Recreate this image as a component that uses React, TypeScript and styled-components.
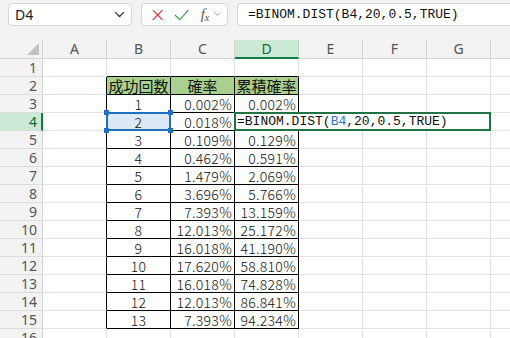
import styled, { createGlobalStyle } from "styled-components";

const GlobalStyle = createGlobalStyle`
  body {
    margin: 0;
    background: #ffffff;
    font-family: "Noto Sans", "Liberation Sans", sans-serif;
  }
`;

const COLUMNS = ["A", "B", "C", "D", "E", "F", "G", "H"];
const ROW_COUNT = 16;
const FORMULA = "=BINOM.DIST(B4,20,0.5,TRUE)";

// data for B3:D15
const rows = [
  { n: "1", p: "0.002%", cum: "0.002%" },
  { n: "2", p: "0.018%", cum: "" },
  { n: "3", p: "0.109%", cum: "0.129%" },
  { n: "4", p: "0.462%", cum: "0.591%" },
  { n: "5", p: "1.479%", cum: "2.069%" },
  { n: "6", p: "3.696%", cum: "5.766%" },
  { n: "7", p: "7.393%", cum: "13.159%" },
  { n: "8", p: "12.013%", cum: "25.172%" },
  { n: "9", p: "16.018%", cum: "41.190%" },
  { n: "10", p: "17.620%", cum: "58.810%" },
  { n: "11", p: "16.018%", cum: "74.828%" },
  { n: "12", p: "12.013%", cum: "86.841%" },
  { n: "13", p: "7.393%", cum: "94.234%" },
];

const GRID = "#e1e1e1";
const LINE = "#000000";

const Chevron = ({ size = 10, color = "#444" }: { size?: number; color?: string }) => (
  <svg width={size} height={size * 0.6} viewBox="0 0 10 6">
    <path d="M1 1 L5 5 L9 1" fill="none" stroke={color} strokeWidth="1.2" />
  </svg>
);

const CancelIcon = () => (
  <svg width="14" height="14" viewBox="0 0 14 14">
    <path d="M2 2 L12 12 M12 2 L2 12" stroke="#e0303a" strokeWidth="1.2" fill="none" />
  </svg>
);

const EnterIcon = () => (
  <svg width="16" height="12" viewBox="0 0 16 12">
    <path d="M1 6 L6 11 L15 1" stroke="#2f9e44" strokeWidth="1.2" fill="none" />
  </svg>
);

type CellProps = {
  $right?: string;
  $bottom?: string;
  $align?: "left" | "center" | "right";
  $bg?: string;
};

const App = () => {
  const cellFor = (r: number, c: number) => {
    // r: 1-based row number, c: 0-based column index (A = 0)
    const inTable = r >= 2 && r <= 15 && c >= 1 && c <= 3;
    const right = inTable || (c === 0 && r >= 2 && r <= 15) ? LINE : GRID;
    const bottom = inTable || (r === 1 && c >= 1 && c <= 3) ? LINE : GRID;

    if (r === 2 && inTable) {
      const label = ["成功回数", "確率", "累積確率"][c - 1];
      return (
        <Cell key={c} $right={right} $bottom={bottom} $align="center" $bg="#a9d08e">
          <HeadText>{label}</HeadText>
        </Cell>
      );
    }

    if (r === 4 && c === 1) {
      return (
        <RefCell key={c}>
          <NumText>2</NumText>
          <Handle $x="left" $y="top" />
          <Handle $x="right" $y="top" />
          <Handle $x="left" $y="bottom" />
          <Handle $x="right" $y="bottom" />
        </RefCell>
      );
    }

    if (r === 4 && c === 3) {
      return (
        <EditCell key={c}>
          =BINOM.DIST(<RefText>B4</RefText>,20,0.5,TRUE)
        </EditCell>
      );
    }
    if (r === 4 && c > 3 && c < 7) return null;

    if (inTable && r >= 3) {
      const d = rows[r - 3];
      const text = c === 1 ? d.n : c === 2 ? d.p : d.cum;
      return (
        <Cell key={c} $right={right} $bottom={bottom} $align={c === 1 ? "center" : "right"}>
          <NumText>{text}</NumText>
        </Cell>
      );
    }

    return <Cell key={c} $right={right} $bottom={bottom} />;
  };

  return (
    <>
      <GlobalStyle />
      <Window>
        <FormulaBar>
          <NameBox>
            <span>D4</span>
            <Chevron size={11} color="#333" />
          </NameBox>
          <ActionGroup>
            <CancelIcon />
            <EnterIcon />
            <FxLabel>
              f<sub>x</sub>
            </FxLabel>
            <Chevron size={7} color="#999" />
          </ActionGroup>
          <FormulaInput>{FORMULA}</FormulaInput>
        </FormulaBar>

        <Sheet>
          <Corner>
            <CornerMark />
          </Corner>
          {COLUMNS.map((col) => (
            <ColHeader key={col} $active={col === "D"}>
              {col}
            </ColHeader>
          ))}

          {Array.from({ length: ROW_COUNT }, (_, i) => i + 1).map((r) => [
            <RowHeader key={`h${r}`} $active={r === 4}>
              {r}
            </RowHeader>,
            ...COLUMNS.map((_, c) => cellFor(r, c)),
          ])}
        </Sheet>
      </Window>
    </>
  );
};

const Window = styled.div`
  width: 510px;
  height: 338px;
  overflow: hidden;
  background: #f3f3f3;
`;

const FormulaBar = styled.div`
  height: 40px;
  box-sizing: border-box;
  padding: 3px 0 0 8px;
  display: flex;
  align-items: flex-start;
  gap: 9px;
`;

const Box = styled.div`
  height: 23px;
  box-sizing: border-box;
  background: #ffffff;
  border: 1px solid #d6d6d6;
  border-radius: 4px;
  display: flex;
  align-items: center;
`;

const NameBox = styled(Box)`
  width: 124px;
  padding: 0 6px 0 6px;
  justify-content: space-between;
  font-size: 14px;
  color: #222;
`;

const ActionGroup = styled(Box)`
  width: 87px;
  padding: 0 6px 0 9px;
  gap: 10px;
`;

const FxLabel = styled.span`
  font-family: "Liberation Serif", serif;
  font-style: italic;
  font-size: 15px;
  line-height: 1;
  color: #555;
  margin-left: 1px;
  margin-right: -5px;

  sub {
    font-size: 10px;
    vertical-align: -2px;
  }
`;

const FormulaInput = styled(Box)`
  flex: 1;
  border-right: none;
  border-radius: 4px 0 0 4px;
  padding-left: 10px;
  font-family: "Liberation Mono", monospace;
  font-size: 13px;
  color: #111;
  white-space: nowrap;
`;

const Sheet = styled.div`
  display: grid;
  grid-template-columns: 43px repeat(8, 64px);
  grid-template-rows: 19px;
  grid-auto-rows: 18px;
  background: #ffffff;
  line-height: 1;
`;

const Corner = styled.div`
  background: #f3f3f3;
  border-right: 1px solid #d4d4d4;
  border-bottom: 1px solid #d4d4d4;
  display: flex;
  align-items: flex-end;
  justify-content: flex-end;
  padding: 0 3px 3px 0;
`;

const CornerMark = styled.div`
  width: 0;
  height: 0;
  border-left: 12px solid transparent;
  border-bottom: 12px solid #c3c3c3;
`;

const ColHeader = styled.div<{ $active?: boolean }>`
  background: ${(p) => (p.$active ? "#caead6" : "#f3f3f3")};
  color: ${(p) => (p.$active ? "#0f6b3a" : "#555")};
  border-right: 1px solid ${(p) => (p.$active ? "#b3dcc2" : "#d4d4d4")};
  border-bottom: ${(p) => (p.$active ? "2px solid #107c41" : "1px solid #d4d4d4")};
  display: flex;
  align-items: center;
  justify-content: center;
  font-size: 14px;
  overflow: hidden;
`;

const RowHeader = styled.div<{ $active?: boolean }>`
  background: ${(p) => (p.$active ? "#caead6" : "#f3f3f3")};
  color: ${(p) => (p.$active ? "#0f6b3a" : "#555")};
  border-right: ${(p) => (p.$active ? "2px solid #107c41" : "1px solid #d4d4d4")};
  border-bottom: 1px solid #dcdcdc;
  display: flex;
  align-items: center;
  justify-content: flex-end;
  padding-right: ${(p) => (p.$active ? "4px" : "5px")};
  font-size: 14px;
  overflow: hidden;
`;

const Cell = styled.div<CellProps>`
  box-sizing: border-box;
  border-right: 1px solid ${(p) => p.$right ?? GRID};
  border-bottom: 1px solid ${(p) => p.$bottom ?? GRID};
  background: ${(p) => p.$bg ?? "#ffffff"};
  display: flex;
  align-items: center;
  justify-content: ${(p) =>
    p.$align === "center" ? "center" : p.$align === "right" ? "flex-end" : "flex-start"};
  padding: ${(p) => (p.$align === "right" ? "0 2px" : "0")};
  overflow: hidden;
  white-space: nowrap;
`;

const HeadText = styled.span`
  font-family: "Noto Sans CJK JP", sans-serif;
  font-size: 15px;
  line-height: 16px;
  color: #111;
`;

const NumText = styled.span`
  font-family: "Noto Sans CJK JP", sans-serif;
  font-size: 14px;
  line-height: 16px;
  font-weight: 300;
  color: #111;
  letter-spacing: 0.3px;
`;

const RefCell = styled.div`
  position: relative;
  box-sizing: border-box;
  background: #dde9f6;
  border: 2px solid #1f6fc2;
  margin: -1px 0 0 -1px;
  display: flex;
  align-items: center;
  justify-content: center;
`;

const Handle = styled.div<{ $x: "left" | "right"; $y: "top" | "bottom" }>`
  position: absolute;
  width: 5px;
  height: 5px;
  background: #1f6fc2;
  ${(p) => p.$x}: -4px;
  ${(p) => p.$y}: -4px;
`;

const EditCell = styled.div`
  grid-column: span 4;
  box-sizing: border-box;
  background: #ffffff;
  border: 2px solid #217346;
  margin: -1px 0 0 -1px;
  display: flex;
  align-items: center;
  padding-left: 1px;
  font-family: "Liberation Mono", monospace;
  font-size: 13px;
  line-height: 16px;
  color: #111;
  white-space: nowrap;
`;

const RefText = styled.span`
  color: #2f75c8;
`;

export default App;
